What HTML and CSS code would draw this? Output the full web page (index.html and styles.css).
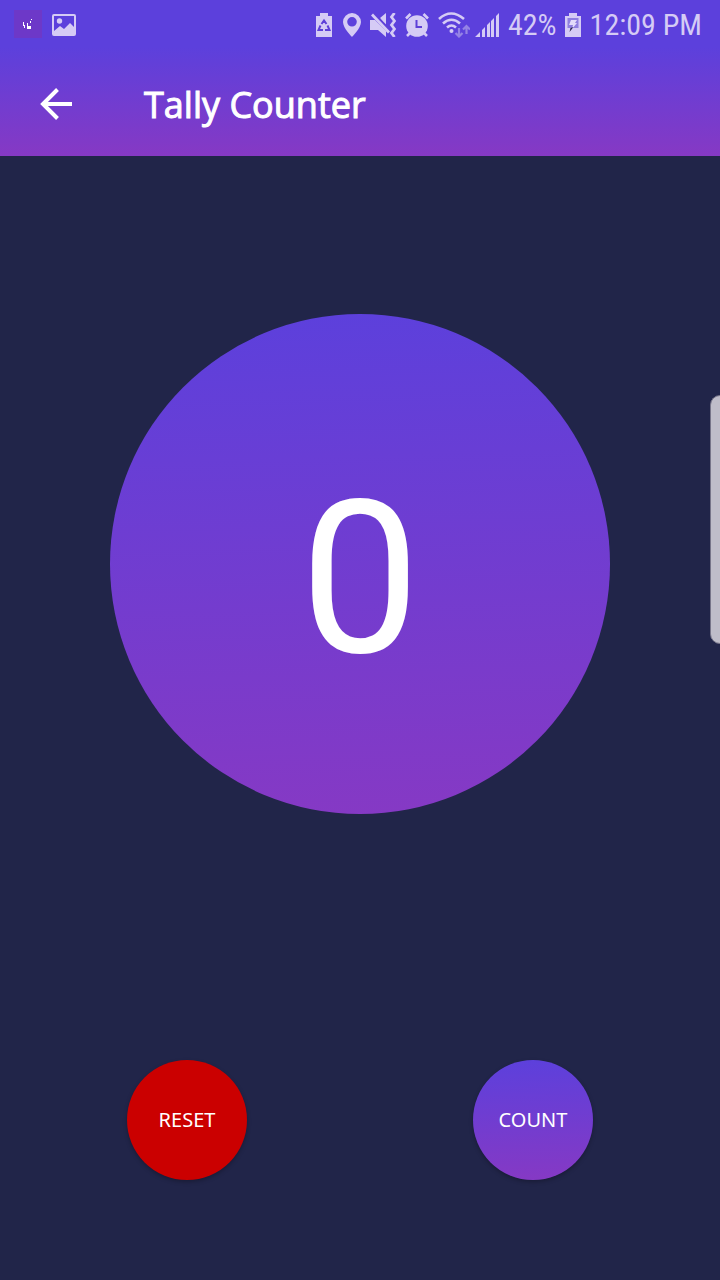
FILE: index.html
```html
<!DOCTYPE html>
<html lang="en">
<head>
<meta charset="utf-8">
<meta name="viewport" content="width=device-width, initial-scale=1">
<title>Tally Counter</title>
<link rel="stylesheet" href="styles.css">
</head>
<body>
<div class="screen">
  <div class="top">
    <div class="status">
      <svg class="app" width="28" height="28" viewBox="0 0 28 28" aria-hidden="true"><path fill="#6d38c8" d="M0 0h28v28H0z"/><path fill="#fff" d="M13 19v-6h1v3h3v3zM9 12h1v3h1v3h-1v-2H9zM16 11h1v2h-1zM17 9h1v1h-1z"/></svg>
      <svg class="photo" width="24" height="24" viewBox="0 0 24 24" aria-hidden="true"><path fill="#d5cbf5" fill-rule="evenodd" d="M2 1h20q2 0 2 2v18q0 2-2 2H2q-2 0-2-2V3q0-2 2-2zm0 2v15l6-5 4 3 6-6 4 4V3z"/><circle cx="7.500" cy="8" r="2.700" fill="#d5cbf5"/></svg>
      <div class="tray">
        <svg class="saver" width="16" height="24" viewBox="0 0 16 24" aria-hidden="true"><path fill="#d5cbf5" d="M4 0h8v3h4v21H0V3h4z"/><g fill="none" stroke="#5e40d8" stroke-width="2"><path d="M5.500 11 8 7.500l2.500 3.500M4.500 12.500 2.500 17H7M11.500 12.500l2 4.500H9"/></g></svg>
        <svg width="18" height="24" viewBox="0 0 18 24" aria-hidden="true"><path fill="#d5cbf5" fill-rule="evenodd" d="M9 0a9 9 0 0 1 9 9c0 6-9 15-9 15S0 15 0 9a9 9 0 0 1 9-9zm0 4a4.800 4.800 0 1 0 0 9.600A4.800 4.800 0 0 0 9 4z"/></svg>
        <svg width="26" height="24" viewBox="0 0 26 24" aria-hidden="true"><path fill="#d5cbf5" d="M0 7h5l11 11v6l-8-7H0zM10 5l6-5v13z"/><path d="M4 0.500 20 17" stroke="#5e40d8" stroke-width="2"/><path d="M2 1.500l17 18" stroke="#d5cbf5" stroke-width="2.800"/><path d="m24.500 0-3 4 3 4-3 4 3 4-3 4 3 4" fill="none" stroke="#d5cbf5" stroke-width="2.800"/></svg>
        <svg width="24" height="24" viewBox="0 0 24 24" aria-hidden="true"><circle cx="12" cy="13" r="10.800" fill="#d5cbf5"/><path d="M1 5.500 5.500 1M18.500 1 23 5.500M5 20l-3 3M19 20l3 3" stroke="#d5cbf5" stroke-width="2.600"/><path d="M11.500 7v7H17" fill="none" stroke="#5e40d8" stroke-width="2"/></svg>
        <svg class="wifi" width="32" height="26" viewBox="0 0 32 26" aria-hidden="true"><g fill="none" stroke="#d5cbf5" stroke-width="2.600"><path d="M1 7q12-11 25 0M5 11.500q8.500-7.500 17 0M9 15.500q4.500-4 9 0"/></g><circle cx="13.500" cy="19" r="2" fill="#d5cbf5"/><path d="M21 16v8M17.500 21l3.500 3.500 3.500-3.500M28.500 22v-8M25 17.500l3.500-3.500 3.500 3.500" fill="none" stroke="#9583e5" stroke-width="2.200"/></svg>
        <svg width="25" height="24" viewBox="0 0 25 24" aria-hidden="true"><path fill="#d5cbf5" d="M0 24l5-5v5zM7 17l3-3v10H7zM12 12l3-3v15h-3zM16 8l3-3v19h-3zM21 3l3-3v24h-3z"/></svg>
        <span class="level">42%</span>
        <svg width="16" height="24" viewBox="0 0 16 24" aria-hidden="true"><path fill="#d5cbf5" d="M4 0h8v3h4v21H0V3h4z"/><path fill="#8f7ee0" d="M2.500 5h11v10h-11z"/><path fill="#e3dbfa" d="M6 7h6l-2 3h2l-5 6 1-4H4z"/><path fill="#29234c" d="m8.500 14-4 5 1-4z"/></svg>
        <span>12:09 PM</span>
      </div>
    </div>
    <header class="bar">
      <button class="back" type="button" aria-label="Back"><svg width="32" height="32" viewBox="0 0 32 32" aria-hidden="true"><path d="M32 16H3M17.500 1.500 3 16l14.500 14.500" fill="none" stroke="#fff" stroke-width="4"/></svg></button>
      <h1 class="title">Tally Counter</h1>
    </header>
  </div>
  <main class="content">
    <div class="dial"><output class="value">0</output></div>
    <div class="actions">
      <button class="action reset" type="button">RESET</button>
      <button class="action count" type="button">COUNT</button>
    </div>
  </main>
  <div class="edge"></div>
</div>
</body>
</html>
```
FILE: styles.css
```css
* { box-sizing: border-box; }
body { margin: 0; background: #212549; font-family: "Noto Sans", "Open Sans", sans-serif; color: #fff; }
button { border: 0; padding: 0; color: inherit; font: inherit; cursor: pointer; }
svg { display: block; flex: none; }
.screen { position: relative; display: flex; flex-direction: column; min-height: 100vh; overflow: hidden; }
.top { background: linear-gradient(#5c40dc 30%, #8639c4); }
.status { display: flex; align-items: center; height: 50px; padding: 0 18px 0 14px; }
.app { margin-bottom: 2px; }
.photo { margin-left: 10px; }
.tray { display: flex; align-items: center; gap: 9px; margin-left: auto; color: #d5cbf5; font: 30px/50px "Roboto Condensed", "Liberation Sans Narrow", Roboto, sans-serif; white-space: nowrap; }
.saver { margin-right: 2px; }
.wifi { margin-right: -4px; }
.level { margin: 0 -1px; }
.bar { display: flex; align-items: center; height: 106px; padding: 2px 40px 0; }
.back { display: flex; width: 32px; margin-right: 72px; background: none; }
.title { margin: 0; padding-top: 2px; font-size: 36px; line-height: 48px; font-weight: 400; font-family: "Open Sans", "Noto Sans", sans-serif; -webkit-text-stroke: 1px #fff; }
.content { flex: 1; display: flex; flex-direction: column; align-items: center; padding: 158px 14px 100px; }
.dial { display: flex; align-items: center; justify-content: center; width: 500px; max-width: 100%; aspect-ratio: 1; border-radius: 50%; background: linear-gradient(178deg, #5c40dc, #8639c4); }
.value { padding-top: 30px; font: 450 213px/260px Roboto, sans-serif; }
.actions { display: flex; justify-content: space-around; width: 100%; margin-top: auto; }
.action { width: 120px; height: 120px; border-radius: 50%; font-size: 20px; line-height: 28px; box-shadow: 0 2px 4px rgba(0, 0, 0, .25); }
.reset { background: #cb0000; }
.count { background: linear-gradient(178deg, #5c40dc, #8639c4); }
.edge { position: absolute; top: 395px; right: -10px; width: 20px; height: 249px; border: 1px solid #777589; border-radius: 12px; background: #bfbdc9; }
```
